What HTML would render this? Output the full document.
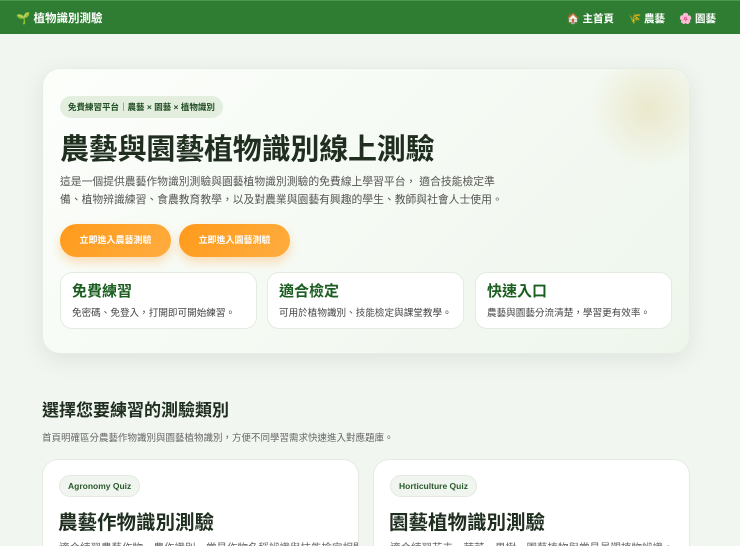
<!DOCTYPE html>
<html><head><meta charset="utf-8"><style>
*{box-sizing:border-box;margin:0;padding:0}
html,body{width:740px;height:546px;overflow:hidden}
body{background:#f1f6f0;font-family:"Liberation Sans","Noto Sans CJK TC",sans-serif;color:#333;position:relative}
.hdr{height:34px;background:#2e7d32;border-top:1px solid #4a9a4e;color:#fff;font-weight:bold;font-size:11px;position:relative}
.hdr .logo{position:absolute;left:16px;top:9px;font-size:11.5px}
.hdr .nav{position:absolute;right:24px;top:10px;font-size:10.5px}
.hdr .nav span{margin-left:14px}
.hero{position:absolute;left:42px;top:68px;width:648px;height:286px;border-radius:18px;background:linear-gradient(135deg,#fcfefb,#eef6ec);box-shadow:0 6px 24px rgba(0,0,0,.08);border:1px solid #e6eee4;overflow:hidden}
.blob{position:absolute;right:-20px;top:-20px;width:120px;height:120px;border-radius:50%;background:radial-gradient(circle,#ebe8cc 0%,rgba(240,240,220,0) 70%)}
.badge{position:absolute;left:17px;top:27px;height:22px;padding:0 8px;border-radius:11px;background:#e3eedf;color:#1f4d22;font-size:8.5px;font-weight:bold;line-height:22px}
h1{position:absolute;left:17px;top:57px;font-size:29px;color:#1f2e1f;font-weight:bold;letter-spacing:-.2px}
.p{position:absolute;left:17px;top:104px;font-size:10.8px;color:#555;line-height:18px;width:450px}
.btn{position:absolute;top:155px;height:33px;width:111px;border-radius:17px;background:linear-gradient(135deg,#ff9a1a,#ffad40);color:#fff;font-size:9px;font-weight:bold;text-align:center;line-height:33px;box-shadow:0 5px 10px rgba(255,150,30,.3)}
.f{position:absolute;top:203px;height:57px;width:197px;background:#fff;border-radius:12px;border:1px solid #e4ece2;padding:8px 11px}
.f b{display:block;font-size:15px;color:#1b5e20;line-height:22px}
.f i{font-style:normal;font-size:9.6px;color:#444}
h2{position:absolute;left:42px;top:396px;font-size:17px;color:#1f2e1f;font-weight:bold}
.sub{position:absolute;left:42px;top:430px;font-size:9.5px;color:#666}
.c{position:absolute;top:459px;height:87px;width:317px;background:#fff;border-radius:16px 16px 0 0;border:1px solid #e4ece2;border-bottom:0;overflow:hidden}
.c .t{position:absolute;left:16px;top:15px;height:22px;padding:0 8px;border-radius:11px;background:#f1f5ef;border:1px solid #e3e9e0;color:#2a5a2c;font-size:8.5px;font-weight:bold;line-height:20px}
.c h3{position:absolute;left:15px;top:46px;font-size:19.5px;color:#1f2e1f;font-weight:bold}
.c p{position:absolute;left:16px;top:80px;font-size:10.5px;color:#666;white-space:nowrap}
</style></head><body>
<div class="hdr"><div class="logo">🌱 植物識別測驗</div><div class="nav"><span>🏠 主首頁</span><span>🌾 農藝</span><span>🌸 園藝</span></div></div>
<div class="hero"><div class="blob"></div>
<div class="badge">免費練習平台｜農藝 × 園藝 × 植物識別</div>
<h1>農藝與園藝植物識別線上測驗</h1>
<div class="p">這是一個提供農藝作物識別測驗與園藝植物識別測驗的免費線上學習平台， 適合技能檢定準備、植物辨識練習、食農教育教學，以及對農業與園藝有興趣的學生、教師與社會人士使用。</div>
<div class="btn" style="left:17px">立即進入農藝測驗</div>
<div class="btn" style="left:136px">立即進入園藝測驗</div>
<div class="f" style="left:17px"><b>免費練習</b><i>免密碼、免登入，打開即可開始練習。</i></div>
<div class="f" style="left:224px"><b>適合檢定</b><i>可用於植物識別、技能檢定與課堂教學。</i></div>
<div class="f" style="left:432px"><b>快速入口</b><i>農藝與園藝分流清楚，學習更有效率。</i></div>
</div>
<h2>選擇您要練習的測驗類別</h2>
<div class="sub">首頁明確區分農藝作物識別與園藝植物識別，方便不同學習需求快速進入對應題庫。</div>
<div class="c" style="left:42px"><div class="t">Agronomy Quiz</div><h3>農藝作物識別測驗</h3><p>適合練習農藝作物、農作識別、常見作物名稱辨識與技能檢定相關</p></div>
<div class="c" style="left:373px"><div class="t">Horticulture Quiz</div><h3>園藝植物識別測驗</h3><p>適合練習花卉、蔬菜、果樹、園藝植物與常見景觀植物辨識。</p></div>
</body></html>
